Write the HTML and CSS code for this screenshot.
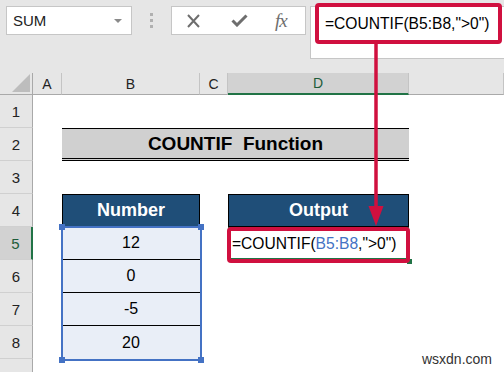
FILE: index.html
```html
<!DOCTYPE html>
<html lang="en">
<head>
    <meta charset="UTF-8">
    <title>COUNTIF Function</title>
    <link rel="stylesheet" href="styles.css">
</head>
<body>
    <div class="page">
        <div class="toolbar">
            <div class="namebox">
                <span>SUM</span>
                <span class="caret"></span>
            </div>
            <div class="grip"><i></i><i></i><i></i></div>
            <div class="fnbox">
                <svg class="ico-x" width="15" height="14" viewBox="0 0 15 14">
                    <path d="M2 1 L13 13 M13 1 L2 13" stroke="#6e6e6e" stroke-width="2" fill="none"/>
                </svg>
                <svg class="ico-check" width="17" height="13" viewBox="0 0 17 13">
                    <path d="M1.5 6.5 L6 11 L15.5 1.5" stroke="#6e6e6e" stroke-width="3" fill="none"/>
                </svg>
                <span class="fx">fx</span>
            </div>
            <div class="formula">=COUNTIF(B5:B8,"&gt;0")</div>
        </div>

        <div class="sheet">
            <div class="corner">
                <svg width="18" height="18" viewBox="0 0 18 18"><path d="M0 18 L18 0 L18 18 Z" fill="#bdbdbd"/></svg>
            </div>
            <div class="ch">A</div>
            <div class="ch">B</div>
            <div class="ch">C</div>
            <div class="ch sel">D</div>
            <div class="ch"></div>

            <div class="rh">1</div>
            <div></div><div></div><div></div><div></div><div></div>

            <div class="rh">2</div>
            <div></div>
            <div class="title">COUNTIF  Function</div>
            <div></div>

            <div class="rh">3</div>
            <div></div><div></div><div></div><div></div><div></div>

            <div class="rh">4</div>
            <div></div>
            <div class="head">Number</div>
            <div></div>
            <div class="head">Output</div>
            <div></div>

            <div class="rh sel">5</div>
            <div></div>
            <div class="num">12</div>
            <div></div>
            <div class="out">=COUNTIF(<span class="ref">B5:B8</span>,"&gt;0")</div>
            <div></div>

            <div class="rh">6</div>
            <div></div>
            <div class="num">0</div>
            <div></div><div></div><div></div>

            <div class="rh">7</div>
            <div></div>
            <div class="num">-5</div>
            <div></div><div></div><div></div>

            <div class="rh">8</div>
            <div></div>
            <div class="num last">20</div>
            <div></div><div></div><div></div>

            <div class="rh"></div>
            <div></div><div></div><div></div><div></div><div></div>
        </div>

        <!-- overlays: selection, callouts, arrow -->
        <div class="selection">
            <span class="handle tl"></span>
            <span class="handle tr"></span>
            <span class="handle bl"></span>
            <span class="handle br"></span>
        </div>
        <div class="fill-handle"></div>
        <div class="mark mark-formula"></div>
        <div class="mark mark-cell"></div>
        <svg class="arrow" width="16" height="184" viewBox="0 0 16 184">
            <path d="M8 0 L8 168" stroke="#d0103f" stroke-width="3.5"/>
            <path d="M0.5 162 L15.5 162 L8 182 Z" fill="#d0103f"/>
        </svg>
        <div class="watermark">wsxdn.com</div>
    </div>
</body>
</html>
```

FILE: styles.css
```css
* {
    box-sizing: border-box;
    margin: 0;
    padding: 0;
}

body {
    font-family: "Liberation Sans", Arial, sans-serif;
    background: #fff;
    color: #000;
}

.page {
    position: relative;
    width: 504px;
    height: 372px;
    overflow: hidden;
}

/* formula bar */
.toolbar {
    display: flex;
    align-items: flex-start;
    height: 73px;
    padding: 6px 0 0 6px;
    background: #e6e6e6;
}

.namebox {
    width: 126px;
    height: 29px;
    display: flex;
    align-items: center;
    justify-content: space-between;
    padding: 0 9px 0 6px;
    background: #fff;
    border: 1px solid #c6c6c6;
    font-size: 15px;
    color: #222;
}

.caret {
    border-left: 4px solid transparent;
    border-right: 4px solid transparent;
    border-top: 4px solid #8a8a8a;
}

.grip {
    display: flex;
    flex-direction: column;
    gap: 3px;
    width: 3px;
    margin: 7px 18px 0 18px;
}

.grip i {
    width: 3px;
    height: 3px;
    background: #b0b0b0;
}

.fnbox {
    width: 135px;
    height: 29px;
    display: flex;
    align-items: center;
    padding-left: 14px;
    background: #fff;
    border: 1px solid #c6c6c6;
}

.ico-check {
    margin-left: 30px;
}

.fx {
    margin-left: 27px;
    font-family: "Liberation Serif", "Times New Roman", serif;
    font-style: italic;
    font-size: 19px;
    color: #6e6e6e;
    letter-spacing: -1px;
}

.formula {
    flex: 1;
    height: 53px;
    margin-left: 4px;
    padding: 8px 0 0 14px;
    background: #fff;
    border: 1px solid #c6c6c6;
    border-right: none;
    font-size: 15.6px;
    white-space: nowrap;
}

/* worksheet */
.sheet {
    display: grid;
    grid-template-columns: 33px 29px 138px 28px 181px 1fr;
    grid-template-rows: 22px repeat(9, 33px);
}

.corner {
    display: flex;
    align-items: flex-end;
    justify-content: flex-end;
    padding: 0 2px 2px 0;
    background: #e6e6e6;
    border-right: 1px solid #a9a9a9;
    border-bottom: 1px solid #a9a9a9;
}

.ch {
    display: flex;
    align-items: center;
    justify-content: center;
    background: #e6e6e6;
    border-right: 1px solid #c4c4c4;
    border-bottom: 1px solid #a9a9a9;
    font-size: 14px;
    color: #222;
}

.ch.sel {
    background: #d2d2d2;
    border-bottom: 2px solid #217346;
    color: #1e5c3a;
}

.rh {
    display: flex;
    align-items: center;
    justify-content: center;
    background: #e6e6e6;
    border-right: 1px solid #a9a9a9;
    border-bottom: 1px solid #d0d0d0;
    font-size: 15px;
    color: #222;
}

.rh.sel {
    background: #d2d2d2;
    border-right: 2px solid #217346;
    color: #1e5c3a;
}

.title {
    grid-column: span 3;
    display: flex;
    align-items: center;
    justify-content: center;
    background: #d0d0d0;
    border-top: 1px solid #000;
    border-bottom: 3px double #000;
    font-size: 19px;
    font-weight: bold;
    white-space: pre;
}

.head {
    display: flex;
    align-items: center;
    justify-content: center;
    background: #1f4e78;
    border: 1px solid #000;
    color: #fff;
    font-size: 18px;
    font-weight: bold;
}

.num {
    display: flex;
    align-items: center;
    justify-content: center;
    background: #e9eef7;
    border-bottom: 1px solid #000;
    font-size: 16px;
}

.num.last {
    border-bottom: none;
}

.out {
    display: flex;
    align-items: center;
    padding-left: 2px;
    border: 2px solid #217346;
    font-size: 15.6px;
    white-space: nowrap;
}

.ref {
    color: #4472c4;
}

/* overlays */
.selection {
    position: absolute;
    left: 61px;
    top: 226px;
    width: 141px;
    height: 135px;
    border: 2px solid #4472c4;
}

.handle {
    position: absolute;
    width: 6px;
    height: 6px;
    background: #4472c4;
}

.handle.tl { left: -4px; top: -4px; }
.handle.tr { right: -4px; top: -4px; }
.handle.bl { left: -4px; bottom: -4px; }
.handle.br { right: -4px; bottom: -4px; }

.fill-handle {
    position: absolute;
    left: 407px;
    top: 259px;
    width: 5px;
    height: 5px;
    background: #217346;
}

.mark {
    position: absolute;
    border: 4px solid #d0103f;
    border-radius: 4px;
}

.mark-formula {
    left: 315px;
    top: 3px;
    width: 187px;
    height: 41px;
}

.mark-cell {
    left: 227px;
    top: 227px;
    width: 183px;
    height: 36px;
}

.arrow {
    position: absolute;
    left: 368px;
    top: 44px;
}

.watermark {
    position: absolute;
    right: 12px;
    bottom: 5px;
    font-size: 14px;
    color: #333;
    background: #fff;
}
```
